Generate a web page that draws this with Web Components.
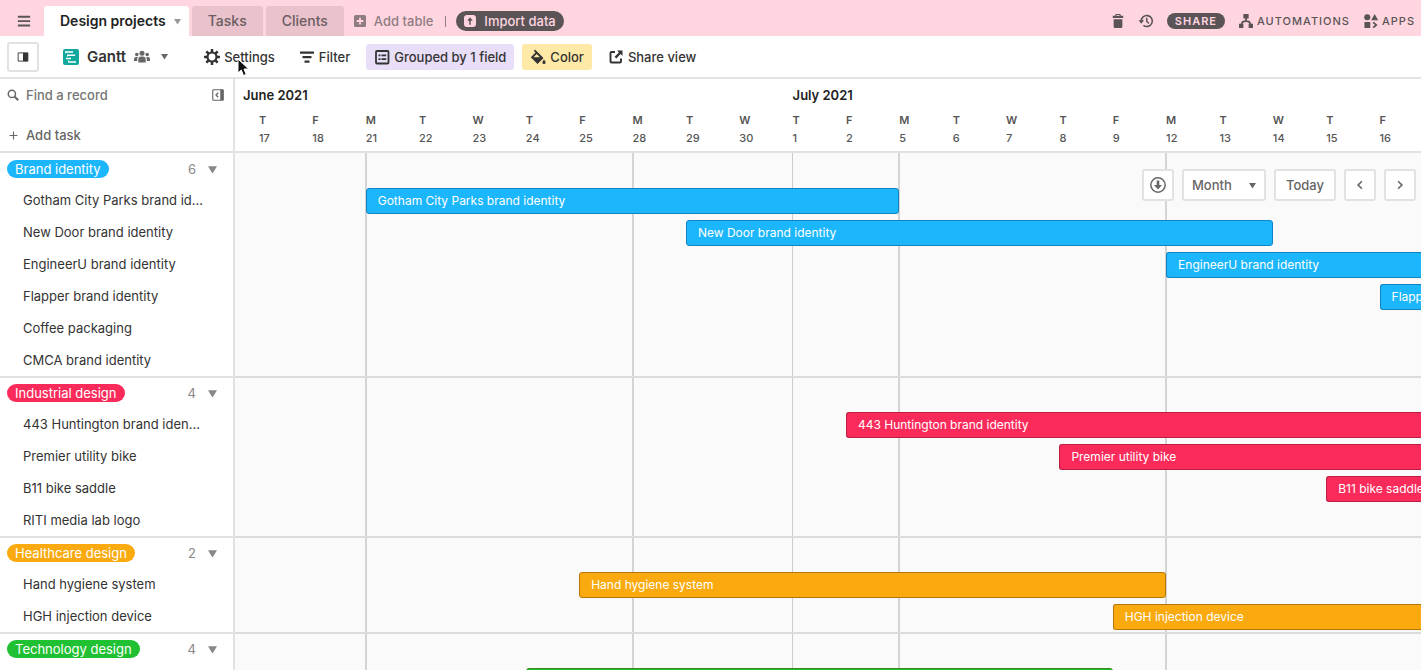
<!DOCTYPE html>
<html lang="en">
<head>
<meta charset="utf-8">
<meta name="viewport" content="width=device-width, initial-scale=1">
<title>Design projects</title>
<style>
	html, body {
		height: 100%;
		margin: 0;
	}
	body {
		overflow: hidden;
		font: 500 13px/20px Inter, "Liberation Sans", sans-serif;
		color: #333;
	}
</style>
</head>
<body>
<gantt-app></gantt-app>

<script>
const ICONS = {
	menu: '<path d="M1 2h14v2.200H1zM1 7h14v2.200H1zM1 12h14v2.200H1z"/>',
	caret: '<path d="M0 2h16L8 15z"/>',
	plusBox: '<path fill-rule="evenodd" d="M2 0h12a2 2 0 0 1 2 2v12a2 2 0 0 1-2 2H2a2 2 0 0 1-2-2V2a2 2 0 0 1 2-2zm4.800 3.500v3.300H3.500v2.400h3.300v3.300h2.400V9.200h3.300V6.800H9.200V3.500z"/>',
	upBox: '<path fill-rule="evenodd" d="M4 0h8a4 4 0 0 1 4 4v8a4 4 0 0 1-4 4H4a4 4 0 0 1-4-4V4a4 4 0 0 1 4-4zm4 3L4.200 7.500H7V13h2V7.500h2.800z"/>',
	trash: '<path d="M5.500 0h5l1 2H14v2.500H2V2h2.500zM3 6h10v8.500a1.500 1.500 0 0 1-1.500 1.500h-7A1.500 1.500 0 0 1 3 14.500z"/><path d="M6.300 1.300h3.400v1H6.300z" fill="#ffd6e0"/>',
	history: '<path d="M2.600 8.500A6.300 6.300 0 1 1 5 13" fill="none" stroke="currentColor" stroke-width="1.800"/><path d="M-.5 7h6.300L2.600 11z"/><path d="M8.800 4.300V8.300l2.500 2.500" fill="none" stroke="currentColor" stroke-width="1.700"/>',
	automations: '<path d="M5 0h6v5H5zM0 11h5v5H0zM11 11h5v5h-5z"/><path d="M8 4v4M3 12c0-3 2-4 5-4s5 1 5 4" fill="none" stroke="currentColor" stroke-width="2"/>',
	apps: '<circle cx="3.700" cy="3.700" r="3.500"/><path d="M12.200 0l4 7H8.200zM.5 9.200h6.700V16H.5z"/><path d="M10.500 9.500l3.500 3-3.500 3" fill="none" stroke="currentColor" stroke-width="2"/>',
	panel: '<path d="M1.500 2.500h13v11h-13z" fill="none" stroke="currentColor" stroke-width="1.200"/><path d="M8 2.500h6.500v11H8z"/>',
	gantt: '<rect width="16" height="16" rx="2" fill="#12a89d"/><path d="M3 3h7M5 6.300h7M3 9.600h5M6 12.900h7" stroke="#fff" stroke-width="1.500"/><path d="M2.500 2.200v2M4.500 5.500v2M5.500 11.500v2" stroke="#fff"/>',
	people: '<circle cx="8" cy="4.300" r="2.500"/><circle cx="2.800" cy="5.500" r="1.800"/><circle cx="13.200" cy="5.500" r="1.800"/><path d="M4.300 13.500v-3a3 3 0 0 1 3-3h1.400a3 3 0 0 1 3 3v3zM0 12v-2a2 2 0 0 1 2-2h1.900c-.5.700-.7 1.500-.7 2.500V12zM16 12v-2a2 2 0 0 0-2-2h-1.900c.5.700.7 1.500.7 2.500V12z"/>',
	gear: '<circle cx="8" cy="8" r="4.500" fill="none" stroke="currentColor" stroke-width="2.200"/><path d="M8 0v3M8 13v3M0 8h3M13 8h3M2.300 2.300l2.200 2.200M11.500 11.500l2.200 2.200M13.700 2.300l-2.200 2.200M4.500 11.500l-2.200 2.200" stroke="currentColor" stroke-width="2.500"/>',
	filter: '<path d="M1 2.500h14v2.200H1zM3.500 7h9v2.200h-9zM5.500 11.500h5v2.200h-5z"/>',
	group: '<rect x="2" y="2" width="12.500" height="12.500" rx="1" fill="none" stroke="currentColor" stroke-width="1.800"/><path d="M4.500 5.500h2v1.700h-2zM7.500 5.500h4.700v1.700H7.500zM4.500 9.300h2V11h-2zM7.500 9.300h4.700V11H7.500z"/>',
	paint: '<path fill-rule="evenodd" d="M5 .5l8.500 8.500L7.500 15 .8 8.300l4.700-4.700L3.900 2zM6.700 5L3.500 8.200h6.400z"/><path d="M14 10.500c1 1.300 1.600 2.200 1.600 3a1.600 1.600 0 0 1-3.200 0c0-.8.6-1.700 1.600-3z"/>',
	share: '<path d="M7 3H3.500a1 1 0 0 0-1 1v8.500a1 1 0 0 0 1 1H12a1 1 0 0 0 1-1V9.500" fill="none" stroke="currentColor" stroke-width="1.900"/><path d="M9 1.500h5.500V7l-1.900-1.900-4.300 4.300-1.700-1.700 4.300-4.300z"/>',
	search: '<circle cx="6.500" cy="6.500" r="4.800" fill="none" stroke="currentColor" stroke-width="2"/><path d="M10 10l5 5" stroke="currentColor" stroke-width="2.500"/>',
	collapse: '<rect x="1" y="1" width="14" height="14" rx="1" fill="none" stroke="currentColor" stroke-width="1.500"/><path d="M11 1h4v14h-4z"/><path d="M8.300 5l-3 3 3 3" fill="none" stroke="currentColor" stroke-width="1.700"/>',
	plus: '<path d="M8 1v14M1 8h14" stroke="currentColor" stroke-width="2"/>',
	down: '<circle cx="8" cy="8" r="7.200" fill="none" stroke="currentColor" stroke-width="1.500"/><path d="M6.700 3.500h2.600V8H12l-4 4.500L4 8h2.700z"/>',
	left: '<path d="M10.500 3l-5 5 5 5" fill="none" stroke="currentColor" stroke-width="2.200"/>',
	right: '<path d="M5.500 3l5 5-5 5" fill="none" stroke="currentColor" stroke-width="2.200"/>'
};

//	weekday, date, and which line starts the column
const DAYS = [
	['T', 17], ['F', 18],
	['M', 21, 'week'], ['T', 22], ['W', 23], ['T', 24], ['F', 25],
	['M', 28, 'week'], ['T', 29], ['W', 30], ['T', 1, 'month'], ['F', 2],
	['M', 5, 'week'], ['T', 6], ['W', 7], ['T', 8], ['F', 9],
	['M', 12, 'week'], ['T', 13], ['W', 14], ['T', 15], ['F', 16]
];

//	start and end are grid lines of the timeline, line 2 is June 17
const GROUPS = [
	{ name: 'Brand identity', fill: '#1cb6fc', edge: '#1283c4', tasks: [
		['Gotham City Parks brand identity', 4, 14],
		['New Door brand identity', 10, 21],
		['EngineerU brand identity', 19, 24],
		['Flapper brand identity', 23, 24],
		['Coffee packaging'],
		['CMCA brand identity']
	] },
	{ name: 'Industrial design', fill: '#fa2b5a', edge: '#ba1e45', tasks: [
		['443 Huntington brand identity', 13, 24],
		['Premier utility bike', 17, 24],
		['B11 bike saddle', 22, 24],
		['RITI media lab logo']
	] },
	{ name: 'Healthcare design', fill: '#faaa0e', edge: '#b87503', tasks: [
		['Hand hygiene system', 8, 19],
		['HGH injection device', 18, 24]
	] },
	{ name: 'Technology design', fill: '#20c033', edge: '#338a17', tasks: [
		['', 7, 18],
		[''],
		[''],
		['']
	] }
];

const render = (element, html) => {
	const template = document.createElement('template');
	template.innerHTML = html;
	element.attachShadow({ mode: 'open' }).appendChild(template.content.cloneNode(true));
};

const BUTTON = `
	button {
		display: flex;
		align-items: center;
		justify-content: center;
		box-sizing: border-box;
		margin: 0;
		padding: 0;
		border: 0;
		background: none;
		color: inherit;
		font: inherit;
		letter-spacing: inherit;
		white-space: nowrap;
		cursor: pointer;
	}`;

customElements.define('ui-icon', class extends HTMLElement {
	connectedCallback() {
		if (this.shadowRoot) {
			return;
		}
		render(this, `
			<style>
				:host { display: block; flex: none; width: 16px; height: 16px; }
				svg { display: block; width: 100%; height: 100%; fill: currentColor; overflow: visible; }
			</style>
			<svg viewBox="0 0 16 16" aria-hidden="true">${ICONS[this.getAttribute('name')]}</svg>`);
	}
});

customElements.define('table-tab', class extends HTMLElement {
	constructor() {
		super();
		render(this, `
			<style>
				${BUTTON}
				:host { display: block; }
				button {
					height: 30px;
					padding: 0 16px;
					border-radius: 3px 3px 0 0;
					background: #e9c2cc;
					color: #6b5d61;
				}
				:host([active]) button {
					padding: 0 8px 0 16px;
					background: #fff;
					color: #222;
					font-weight: 600;
					gap: 8px;
				}
			</style>
			<button type="button"><slot></slot></button>`);
	}
});

customElements.define('top-bar', class extends HTMLElement {
	constructor() {
		super();
		render(this, `
			<style>
				${BUTTON}
				:host {
					display: flex;
					align-items: center;
					justify-content: space-between;
					height: 36px;
					padding-top: 6px;
					box-sizing: border-box;
					background: #ffd6e0;
					color: #5a5456;
					font-size: 14px;
				}
				nav, .tabs, .actions { display: flex; align-items: center; }
				.tabs { gap: 3px; }
				.menu { width: 44px; padding-left: 4px; }
				.menu ui-icon { width: 14px; height: 14px; }
				.caret { width: 7px; height: 7px; color: #999; }
				.add { gap: 8px; margin-left: 10px; color: #8f7d82; font-size: 13px; }
				.add ui-icon { width: 12px; height: 12px; }
				.line { width: 1px; height: 11px; margin: 0 10px 0 12px; background: #8f7d82; }
				.import {
					height: 20px;
					gap: 8px;
					padding: 0 8px;
					border-radius: 10px;
					background: #5a5456;
					color: #ffd6e0;
					font-size: 13px;
				}
				.import ui-icon { width: 12px; height: 12px; }
				.actions { gap: 14px; padding-right: 6px; font-size: 11px; letter-spacing: 1px; }
				.actions button { gap: 4px; }
				.actions ui-icon { width: 14px; height: 14px; }
				.actions .share {
					height: 16px;
					padding: 0 8px;
					border-radius: 8px;
					background: #5a5456;
					color: #ffd6e0;
					font-weight: 600;
				}
			</style>
			<nav>
				<button type="button" class="menu" aria-label="Menu"><ui-icon name="menu"></ui-icon></button>
				<div class="tabs">
					<table-tab active>Design projects<ui-icon class="caret" name="caret"></ui-icon></table-tab>
					<table-tab>Tasks</table-tab>
					<table-tab>Clients</table-tab>
				</div>
				<button type="button" class="add"><ui-icon name="plusBox"></ui-icon>Add table</button>
				<span class="line"></span>
				<button type="button" class="import"><ui-icon name="upBox"></ui-icon>Import data</button>
			</nav>
			<div class="actions">
				<button type="button" aria-label="Trash"><ui-icon name="trash"></ui-icon></button>
				<button type="button" aria-label="History"><ui-icon name="history"></ui-icon></button>
				<button type="button" class="share">SHARE</button>
				<button type="button"><ui-icon name="automations"></ui-icon>AUTOMATIONS</button>
				<button type="button"><ui-icon name="apps"></ui-icon>APPS</button>
			</div>`);
	}
});

customElements.define('tool-button', class extends HTMLElement {
	constructor() {
		super();
		render(this, `
			<style>
				${BUTTON}
				:host { display: block; }
				button {
					height: 26px;
					gap: 4px;
					padding: 0 8px;
					border-radius: 3px;
					background: var(--tint, none);
				}
			</style>
			<button type="button"><ui-icon name="${this.getAttribute('icon')}"></ui-icon><slot></slot></button>`);
	}
});

customElements.define('view-bar', class extends HTMLElement {
	constructor() {
		super();
		render(this, `
			<style>
				${BUTTON}
				:host {
					display: flex;
					align-items: center;
					gap: 8px;
					height: 41px;
					padding-left: 7px;
					border-bottom: 2px solid #e2e2e2;
				}
				.toggle { width: 32px; height: 30px; border: 2px solid #e2e2e2; border-radius: 3px; }
				.toggle ui-icon { width: 12px; height: 12px; }
				.view { gap: 8px; margin: 0 18px 0 16px; font-size: 15px; font-weight: 600; }
				.people { color: #666; }
				.caret { width: 7px; height: 7px; margin: 0 2px 0 3px; color: #666; }
				.group { --tint: #e8def8; }
				.color { --tint: #ffe9a6; }
			</style>
			<button type="button" class="toggle" aria-label="Views"><ui-icon name="panel"></ui-icon></button>
			<button type="button" class="view">
				<ui-icon name="gantt"></ui-icon>Gantt<ui-icon class="people" name="people"></ui-icon><ui-icon class="caret" name="caret"></ui-icon>
			</button>
			<tool-button icon="gear">Settings</tool-button>
			<tool-button icon="filter">Filter</tool-button>
			<tool-button icon="group" class="group">Grouped by 1 field</tool-button>
			<tool-button icon="paint" class="color">Color</tool-button>
			<tool-button icon="share">Share view</tool-button>`);
	}
});

customElements.define('record-group', class extends HTMLElement {
	set data(group) {
		render(this, `
			<style>
				${BUTTON}
				:host { display: block; border-bottom: 2px solid #e2e2e2; font-weight: 400; }
				header { display: flex; align-items: center; height: 30px; padding: 0 16px 0 7px; }
				.pill {
					margin-right: auto;
					padding: 0 8px;
					border-radius: 9px;
					background: ${group.fill};
					color: #fff;
					line-height: 18px;
				}
				.count { margin-right: 12px; color: #888; }
				button { color: #888; }
				ui-icon { width: 9px; height: 9px; }
				ul { margin: 0; padding: 0; list-style: none; }
				li {
					height: 32px;
					padding: 0 29px 0 23px;
					overflow: hidden;
					line-height: 32px;
					text-overflow: ellipsis;
					white-space: nowrap;
				}
			</style>
			<header>
				<span class="pill">${group.name}</span>
				<span class="count">${group.tasks.length}</span>
				<button type="button" aria-label="Collapse"><ui-icon name="caret"></ui-icon></button>
			</header>
			<ul>${group.tasks.map(([name]) => `<li>${name}</li>`).join('')}</ul>`);
	}
});

customElements.define('record-list', class extends HTMLElement {
	constructor() {
		super();
		render(this, `
			<style>
				${BUTTON}
				:host { display: block; min-width: 0; border-right: 2px solid #e2e2e2; overflow: hidden; }
				.head {
					display: flex;
					flex-direction: column;
					justify-content: space-between;
					box-sizing: border-box;
					height: 74px;
					margin-bottom: 1px;
					padding: 6px 9px 6px 7px;
					border-bottom: 2px solid #e2e2e2;
					color: #666;
				}
				label { display: flex; align-items: center; gap: 7px; }
				input {
					flex: 1;
					width: 100%;
					min-width: 0;
					padding: 0;
					border: 0;
					outline: 0;
					background: none;
					font: inherit;
					color: inherit;
				}
				input::placeholder { color: #757575; opacity: 1; }
				ui-icon { width: 12px; height: 12px; }
				.row { display: flex; }
				.row label { flex: 1; min-width: 0; }
				.add { align-self: flex-start; gap: 8px; }
				.add ui-icon { width: 9px; height: 9px; margin-left: 2px; }
			</style>
			<div class="head">
				<div class="row">
					<label><ui-icon name="search"></ui-icon><input type="text" placeholder="Find a record" aria-label="Find a record"></label>
					<button type="button" aria-label="Hide list"><ui-icon name="collapse"></ui-icon></button>
				</div>
				<button type="button" class="add"><ui-icon name="plus"></ui-icon>Add task</button>
			</div>`);
		GROUPS.forEach(group => {
			const item = document.createElement('record-group');
			item.data = group;
			this.shadowRoot.appendChild(item);
		});
	}
});

customElements.define('timeline-group', class extends HTMLElement {
	set data(group) {
		const bars = group.tasks.map(([name, start, end], index) => start ? `
			<div class="bar${end == 24 ? ' open' : ''}" style="grid-area: ${index + 1} / ${start} / auto / ${end}">${name}</div>` : '').join('');
		render(this, `
			<style>
				:host { display: block; padding-top: 30px; border-bottom: 2px solid #dcdcdc; }
				.rows {
					display: grid;
					grid-template-columns: var(--days);
					grid-template-rows: repeat(${group.tasks.length}, 32px);
				}
				.bar {
					box-sizing: border-box;
					height: 26px;
					margin-top: 4px;
					padding: 0 11px;
					overflow: hidden;
					border: 1px solid ${group.edge};
					border-radius: 3px;
					background: ${group.fill};
					color: #fff;
					font-weight: 400;
					font-size: 12px;
					line-height: 24px;
					white-space: nowrap;
				}
				.open { border-right: 0; border-radius: 3px 0 0 3px; padding-right: 0; }
			</style>
			<div class="rows">${bars}</div>`);
	}
});

customElements.define('timeline-controls', class extends HTMLElement {
	constructor() {
		super();
		render(this, `
			<style>
				${BUTTON}
				:host { display: flex; gap: 8px; color: #666; }
				button, .scale {
					box-sizing: border-box;
					min-width: 32px;
					height: 32px;
					border: 2px solid #e2e2e2;
					border-radius: 3px;
					background: #fff;
				}
				.today { padding: 0 10px; }
				.scale { display: grid; align-items: center; width: 84px; }
				.scale > * { grid-area: 1 / 1; }
				select {
					appearance: none;
					height: 28px;
					padding: 0 8px;
					border: 0;
					outline: 0;
					background: none;
					color: inherit;
					font: inherit;
				}
				.caret { width: 7px; height: 7px; justify-self: end; margin-right: 8px; pointer-events: none; }
				.step { width: 12px; height: 12px; }
			</style>
			<button type="button" aria-label="Jump to records"><ui-icon name="down"></ui-icon></button>
			<label class="scale">
				<select aria-label="Time scale"><option>Month</option></select>
				<ui-icon class="caret" name="caret"></ui-icon>
			</label>
			<button type="button" class="today">Today</button>
			<button type="button" aria-label="Previous"><ui-icon class="step" name="left"></ui-icon></button>
			<button type="button" aria-label="Next"><ui-icon class="step" name="right"></ui-icon></button>`);
	}
});

customElements.define('time-line', class extends HTMLElement {
	constructor() {
		super();
		const days = DAYS.map(([day, date], index) => `
			<div class="day" style="grid-column: ${index + 2}"><b>${day}</b><span>${date}</span></div>`).join('');
		const lines = DAYS.map(([, , line], index) => line ? `
			<i class="${line}" style="grid-column: ${index + 2}"></i>` : '').join('');
		render(this, `
			<style>
				:host {
					--days: 24px repeat(22, 4.5%);
					display: flex;
					flex-direction: column;
					position: relative;
					min-width: 0;
					overflow: hidden;
				}
				.scale {
					display: grid;
					grid-template-columns: var(--days);
					grid-template-rows: 32px 40px;
					flex: none;
					border-bottom: 2px solid #e2e2e2;
				}
				.month { grid-row: 1; font-weight: 600; line-height: 32px; color: #222; white-space: nowrap; }
				.first { grid-column: 1 / 8; padding-left: 8px; }
				.second { grid-column: 12 / 18; }
				.day { grid-row: 2; display: flex; flex-direction: column; font-size: 11px; line-height: 18px; color: #555; }
				.day b { font-weight: 600; }
				.body { position: relative; flex: 1; padding-top: 1px; background: #fafafa; }
				.lines {
					position: absolute;
					inset: 0;
					display: grid;
					grid-template-columns: var(--days);
				}
				.lines i { grid-row: 1; margin-left: -1px; }
				.lines .week { width: 2px; background: #d4d4d4; }
				.lines .month { width: 1px; background: #ccc; }
				.groups { position: relative; }
				timeline-controls { position: absolute; top: 90px; right: 5px; }
			</style>
			<div class="scale">
				<div class="month first">June 2021</div>
				<div class="month second">July 2021</div>
				${days}
			</div>
			<div class="body">
				<div class="lines">${lines}</div>
				<div class="groups"></div>
			</div>
			<timeline-controls></timeline-controls>`);
		const groups = this.shadowRoot.querySelector('.groups');
		GROUPS.forEach(group => {
			const item = document.createElement('timeline-group');
			item.data = group;
			groups.appendChild(item);
		});
	}
});

customElements.define('mouse-pointer', class extends HTMLElement {
	constructor() {
		super();
		render(this, `
			<style>
				:host { display: block; position: absolute; top: 58px; left: 237px; pointer-events: none; }
				svg { display: block; }
			</style>
			<svg width="13" height="19" viewBox="0 0 13 19" aria-hidden="true">
				<path d="M1 1v14l3.300-3 2.200 5.500 2.700-1.100L7 11h4.700z" fill="#111" stroke="#fff"/>
			</svg>`);
	}
});

customElements.define('gantt-app', class extends HTMLElement {
	constructor() {
		super();
		render(this, `
			<style>
				:host { display: flex; flex-direction: column; height: 100vh; overflow: hidden; background: #fff; }
				top-bar, view-bar { flex: none; }
				main {
					display: grid;
					grid-template-columns: 235px minmax(0, 1fr);
					flex: 1;
					min-height: 0;
				}
			</style>
			<top-bar></top-bar>
			<view-bar></view-bar>
			<main>
				<record-list></record-list>
				<time-line></time-line>
			</main>
			<mouse-pointer></mouse-pointer>`);
	}
});
</script>
</body>
</html>
